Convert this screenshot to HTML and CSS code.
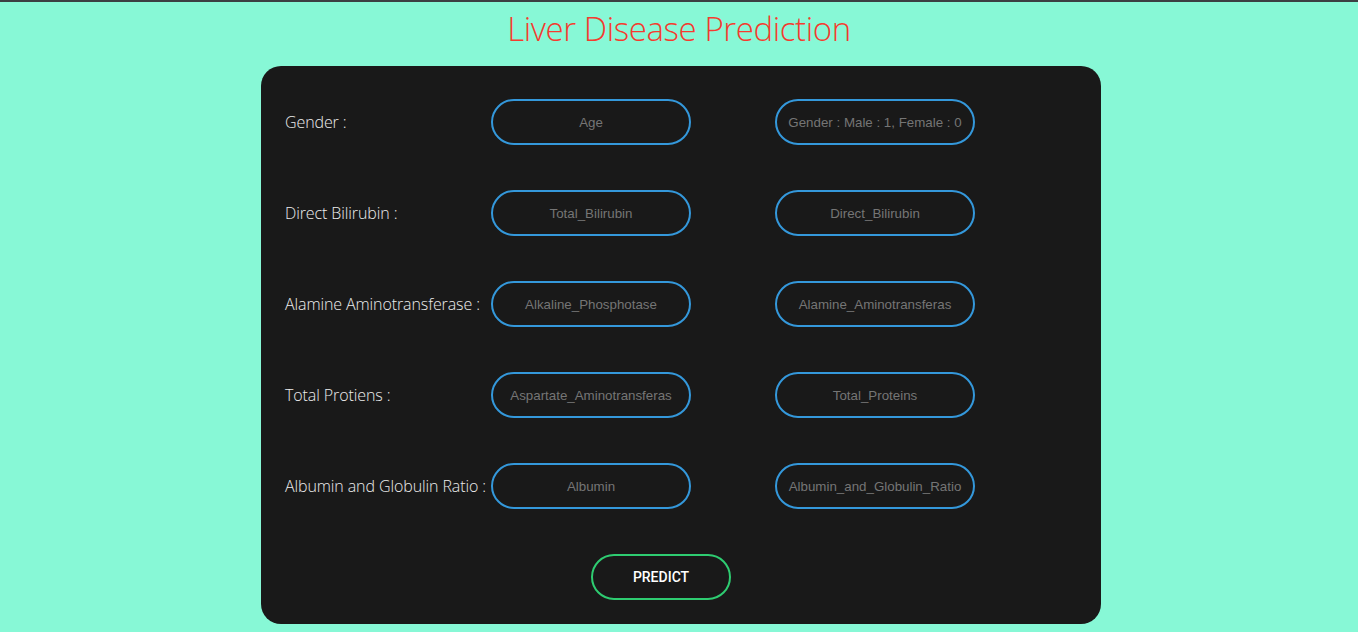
FILE: index.html
```html
<!DOCTYPE html>
<html>
<head>
<meta charset="utf-8">
<link rel="stylesheet" href="styles.css">
</head>
<body>
<div class="topbar"></div>
<h1 class="title">Liver Disease Prediction</h1>
<form class="card">
  <div class="grid">
    <label class="lbl">Gender :</label>
    <input class="field" placeholder="Age">
    <input class="field" placeholder="Gender : Male : 1, Female : 0">
    <label class="lbl">Direct Bilirubin :</label>
    <input class="field" placeholder="Total_Bilirubin">
    <input class="field" placeholder="Direct_Bilirubin">
    <label class="lbl">Alamine Aminotransferase :</label>
    <input class="field" placeholder="Alkaline_Phosphotase">
    <input class="field" placeholder="Alamine_Aminotransferas">
    <label class="lbl">Total Protiens :</label>
    <input class="field" placeholder="Aspartate_Aminotransferas">
    <input class="field" placeholder="Total_Proteins">
    <label class="lbl">Albumin and Globulin Ratio :</label>
    <input class="field" placeholder="Albumin">
    <input class="field" placeholder="Albumin_and_Globulin_Ratio">
  </div>
  <div class="actions">
    <button type="button" class="predict">PREDICT</button>
  </div>
</form>
</body>
</html>
```
FILE: styles.css
```css
html, body {
  margin: 0;
  padding: 0;
}
body {
  background: #87f8d6;
  height: 632px;
  overflow: hidden;
  font-family: "Open Sans", sans-serif;
}
.topbar {
  height: 2px;
  background: #3c4043;
}
.title {
  margin: 7px 0 0;
  text-align: center;
  font-family: "Open Sans", sans-serif;
  font-weight: 300;
  font-size: 33px;
  letter-spacing: -0.4px;
  line-height: 40px;
  color: #f53b2f;
}
.card {
  width: 840px;
  box-sizing: border-box;
  margin: 17px 0 0 261px;
  background: #191919;
  border-radius: 20px;
  padding: 33px 24px 24px 24px;
  height: 558px;
}
.grid {
  display: grid;
  grid-template-columns: 206px 200px 200px;
  row-gap: 45px;
  align-items: center;
}
.grid .field:nth-child(3n) {
  margin-left: 84px;
}
.lbl {
  font-family: "Open Sans", sans-serif;
  font-weight: 300;
  font-size: 16px;
  letter-spacing: -0.1px;
  color: #ececec;
  white-space: nowrap;
}
.field {
  box-sizing: border-box;
  width: 200px;
  height: 46px;
  border: 2px solid #3498db;
  border-radius: 23px;
  background: transparent;
  text-align: center;
  font-family: "Liberation Sans", Arial, sans-serif;
  font-size: 13.33px;
  color: #ddd;
  outline: none;
  padding: 0 8px;
}
.field::placeholder {
  color: #757575;
}
.actions {
  margin-top: 45px;
  padding-left: 306px;
}
.predict {
  box-sizing: border-box;
  width: 140px;
  height: 46px;
  border: 2px solid #2ecc71;
  border-radius: 23px;
  background: transparent;
  color: #fff;
  font-family: Roboto, "Liberation Sans", sans-serif;
  font-weight: 500;
  font-size: 14px;
}
```
